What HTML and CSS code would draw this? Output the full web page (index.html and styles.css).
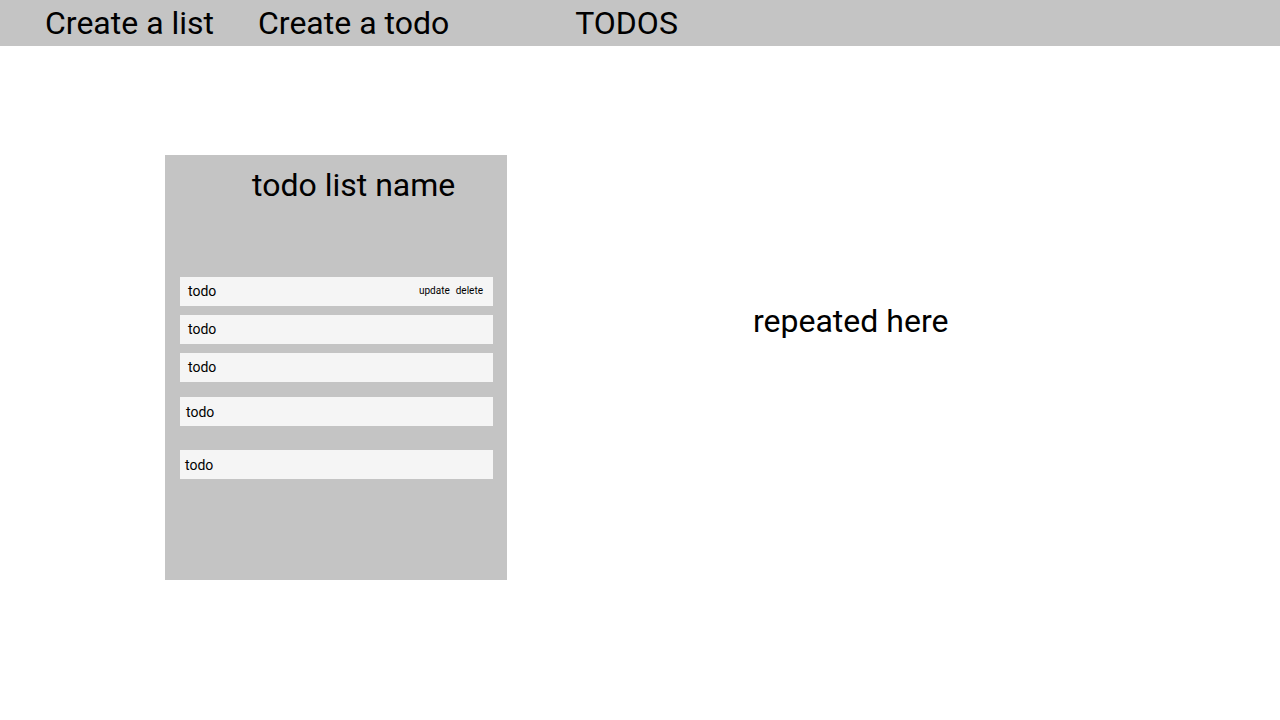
FILE: index.html
```html
<!DOCTYPE html>
<html lang="en">
<head>
<meta charset="utf-8">
<title>TODOS</title>
<meta name="viewport" content="width=device-width, initial-scale=1">
<link rel="stylesheet" href="styles.css">
</head>
<body>
<header class="topbar">
  <nav class="actions">
    <button class="action" type="button">Create a list</button>
    <button class="action" type="button">Create a todo</button>
  </nav>
  <h1 class="brand">TODOS</h1>
</header>
<main class="board">
  <section class="list">
    <h2 class="list-name">todo list name</h2>
    <ul class="todos">
      <li class="todo">
        <span>todo</span>
        <span class="todo-actions">
          <button class="todo-action" type="button">update</button>
          <button class="todo-action" type="button">delete</button>
        </span>
      </li>
      <li class="todo">todo</li>
      <li class="todo">todo</li>
      <li class="todo todo-spaced">todo</li>
      <li class="todo todo-far">todo</li>
    </ul>
  </section>
  <p class="repeat">repeated here</p>
</main>
</body>
</html>
```
FILE: styles.css
```css
* {
  box-sizing: border-box;
}

body {
  margin: 0;
  background: #fff;
  color: #000;
  font-family: Roboto, sans-serif;
  font-size: 14px;
  line-height: 16px;
}

button {
  border: 0;
  padding: 0;
  background: none;
  color: inherit;
  font: inherit;
  cursor: pointer;
}

h1, h2, p, ul {
  margin: 0;
  padding: 0;
  font-weight: 400;
}

.topbar {
  display: flex;
  gap: 126px;
  padding: 4px 45px;
  background: #c4c4c4;
}

.actions {
  display: flex;
  gap: 44px;
}

.action,
.brand,
.list-name,
.repeat {
  font-size: 32px;
  line-height: 38px;
}

.board {
  display: flex;
  align-items: flex-start;
  gap: 246px;
  padding: 109px 165px;
}

.list {
  flex: 0 1 342px;
  padding: 11px 14px 101px 15px;
  background: #c4c4c4;
}

.list-name {
  padding-left: 72px;
}

.todos {
  display: flex;
  flex-direction: column;
  gap: 9px;
  margin-top: 73px;
  list-style: none;
}

.todo {
  display: flex;
  align-items: center;
  justify-content: space-between;
  padding: 6px 10px 7px 8px;
  background: #f5f5f5;
}

.todo-spaced {
  margin-top: 6px;
  padding: 7px 6px 6px;
}

.todo-far {
  margin-top: 15px;
  padding: 7px 5px 6px;
}

.todo-actions {
  display: flex;
  gap: 6px;
}

.todo-action {
  font-size: 10px;
  line-height: 16px;
}

.repeat {
  padding-top: 147px;
}
```
